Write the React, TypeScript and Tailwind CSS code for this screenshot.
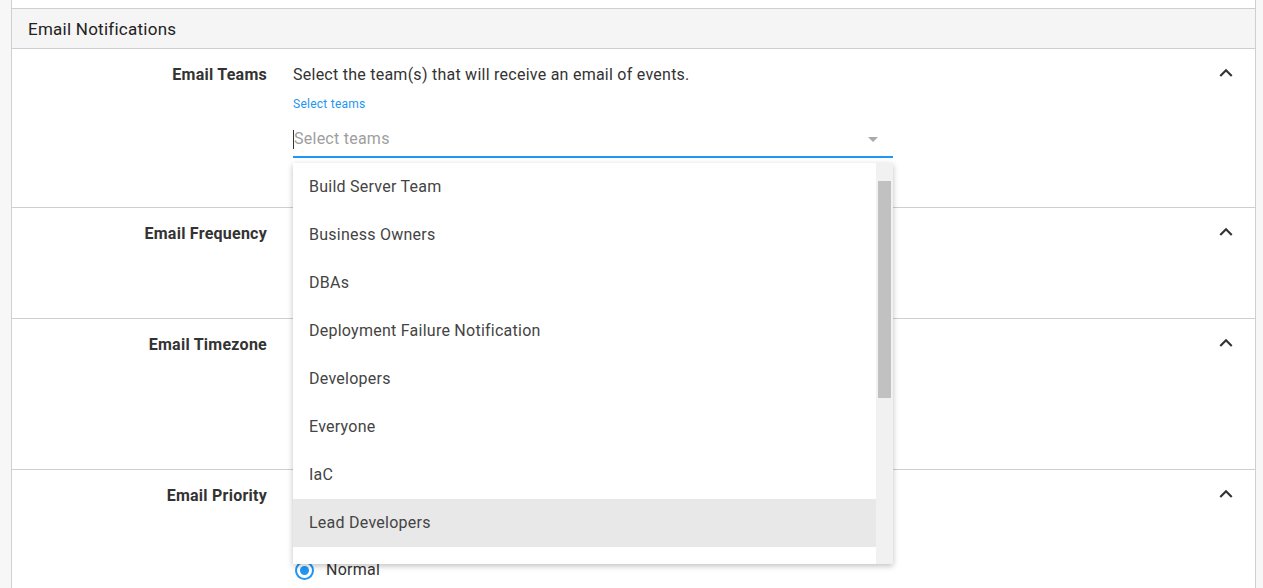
const teams = [
  'Build Server Team',
  'Business Owners',
  'DBAs',
  'Deployment Failure Notification',
  'Developers',
  'Everyone',
  'IaC',
  'Lead Developers',
]

function ExpandLess() {
  return (
    <svg viewBox="0 0 24 24" className="w-[26px] h-[26px] fill-[#333]">
      <path d="M12 8l-6 6 1.41 1.41L12 10.83l4.59 4.58L18 14z" />
    </svg>
  )
}

function Row({ label, height, children }: { label: string; height: string; children?: React.ReactNode }) {
  return (
    <div className={`flex border-b border-[#cfcfcf] ${height}`}>
      <div className="w-[255px] shrink-0 pt-[16px] text-right text-[16px] leading-5 font-bold text-[#333]">{label}</div>
      <div className="ml-[26px] flex-1 pt-[16px]">{children}</div>
      <div className="w-[60px] shrink-0 pt-[11px] pl-[18px]">
        <ExpandLess />
      </div>
    </div>
  )
}

export default function App() {
  return (
    <div className="h-[588px] overflow-hidden bg-[#f7f7f7] font-['Roboto',sans-serif] tracking-[0.25px]">
      <div className="ml-[11px] w-[1245px] h-full border-x border-[#cfcfcf] bg-white">
        <div className="h-[9px] border-b border-[#cfcfcf]" />
        <div className="h-[40px] flex items-center bg-[#f5f5f5] border-b border-[#cfcfcf] pl-[16px] pt-[2px] text-[17px] text-[#222]">
          Email Notifications
        </div>

        <Row label="Email Teams" height="h-[159px]">
          <div className="text-[16px] leading-5 text-[#333]">Select the team(s) that will receive an email of events.</div>
          <div className="w-[600px]">
            <div className="mt-[11px] text-[12px] leading-4 text-[#2196f3]">Select teams</div>
            <div className="relative mt-[16px]">
              <div className="flex items-center h-[30px] pb-[6px] border-b-2 border-[#2196f3]">
                <span className="w-px h-[19px] bg-[#333]" />
                <span className="flex-1 text-[16px] text-[#9e9e9e]">Select teams</span>
                <span className="mr-[15px] w-0 h-0 border-x-[5px] border-x-transparent border-t-[5px] border-t-[#aaa]" />
              </div>
              <div className="absolute left-0 top-full mt-[5px] z-10 w-[600px] h-[401px] bg-white shadow-[0_2px_6px_rgba(0,0,0,0.25)] flex overflow-hidden">
                <div className="flex-1">
                  {teams.map((t, i) => (
                    <div key={t} className={`h-[48px] flex items-center pl-[16px] text-[16px] text-[#444] ${i === 7 ? 'bg-[#e8e8e8]' : ''}`}>
                      {t}
                    </div>
                  ))}
                </div>
                <div className="w-[17px] bg-[#f1f1f1] pt-[18px] px-[2px]">
                  <div className="h-[217px] bg-[#c1c1c1]" />
                </div>
              </div>
            </div>
          </div>
        </Row>

        <Row label="Email Frequency" height="h-[111px]" />
        <Row label="Email Timezone" height="h-[151px]" />
        <Row label="Email Priority" height="h-[140px]">
          <div className="mt-[72px] flex items-center gap-[12px] pl-[2px]">
            <span className="w-[19px] h-[19px] rounded-full border-2 border-[#2196f3] flex items-center justify-center">
              <span className="w-[9px] h-[9px] rounded-full bg-[#2196f3]" />
            </span>
            <span className="text-[16px] text-[#333]">Normal</span>
          </div>
        </Row>
      </div>
    </div>
  )
}
